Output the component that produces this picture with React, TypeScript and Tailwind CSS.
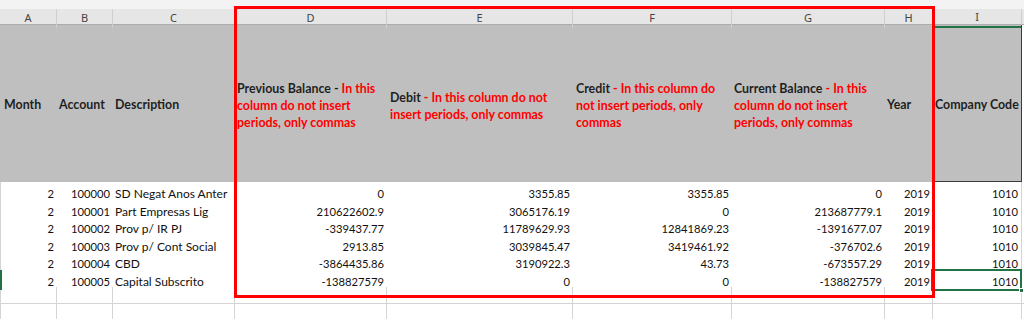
const cols = "grid grid-cols-[57px_56px_122px_152px_186px_159px_153px_48px_89px_1fr]";

const letters = ["A", "B", "C", "D", "E", "F", "G", "H", "I"];

const rows = [
  ["2", "100000", "SD Negat Anos Anter", "0", "3355.85", "3355.85", "0", "2019", "1010"],
  ["2", "100001", "Part Empresas Lig", "210622602.9", "3065176.19", "0", "213687779.1", "2019", "1010"],
  ["2", "100002", "Prov p/ IR PJ", "-339437.77", "11789629.93", "12841869.23", "-1391677.07", "2019", "1010"],
  ["2", "100003", "Prov p/ Cont Social", "2913.85", "3039845.47", "3419461.92", "-376702.6", "2019", "1010"],
  ["2", "100004", "CBD", "-3864435.86", "3190922.3", "43.73", "-673557.29", "2019", "1010"],
  ["2", "100005", "Capital Subscrito", "-138827579", "0", "0", "-138827579", "2019", "1010"],
];

function Note({ title, lines, first }: { title: string; lines: string[]; first: string }) {
  return (
    <div className="leading-[17px]">
      <div className="whitespace-nowrap">
        <span className="text-[#1f1f1f]">{title}</span>
        <span className="text-[#ff0000]">{first}</span>
      </div>
      {lines.map((l) => (
        <div key={l} className="whitespace-nowrap text-[#ff0000]">
          {l}
        </div>
      ))}
    </div>
  );
}

export default function App() {
  return (
    <div
      className="relative w-[1024px] h-[319px] overflow-hidden bg-white"
      style={{ fontFamily: "Lato, 'Noto Sans', sans-serif" }}
    >
      {/* strip above column letters */}
      <div className="h-[9px] bg-[#f3f3f3]" />

      {/* column letters */}
      <div className={`${cols} h-[16px] bg-[#e6e6e6] border-b border-[#acacac]`}>
        {letters.map((l, i) => (
          <div
            key={l}
            className={`flex items-center justify-center border-r border-[#cfcfcf] text-[11px] text-[#444] ${
              i === 8 ? "border-b-2 border-b-[#217346] text-[#1e5e3a]" : ""
            }`}
            style={{ fontFamily: "'Noto Sans', sans-serif" }}
          >
            {l}
          </div>
        ))}
        <div />
      </div>

      {/* header row */}
      <div className={`${cols} h-[157px] bg-[#bfbfbf] text-[12.4px] font-bold text-[#1f1f1f]`}>
        <div className="flex items-center pt-[4px] pl-[4px]">Month</div>
        <div className="flex items-center pt-[4px] pl-[2px]">Account</div>
        <div className="flex items-center pt-[4px] pl-[2px]">Description</div>
        <div className="flex items-center pt-[4px] pl-[2px]">
          <Note
            title="Previous Balance -  "
            first="In this"
            lines={["column do not insert", "periods, only commas"]}
          />
        </div>
        <div className="flex items-center pt-[4px] pl-[3px]">
          <Note
            title="Debit"
            first=" - In this column do not"
            lines={["insert periods, only commas"]}
          />
        </div>
        <div className="flex items-center pt-[4px] pl-[3px]">
          <Note
            title="Credit"
            first=" - In this column do"
            lines={["not insert periods, only", "commas"]}
          />
        </div>
        <div className="flex items-center pt-[4px] pl-[2px]">
          <Note
            title="Current Balance"
            first=" - In this"
            lines={["column do not insert", "periods, only commas"]}
          />
        </div>
        <div className="flex items-center pt-[4px] pl-[2px]">Year</div>
        <div className="flex items-center pt-[4px] pl-[1px] border-l border-r border-b border-[#3c3c3c] whitespace-nowrap">
          Company Code
        </div>
        <div className="bg-white" />
      </div>

      {/* data rows */}
      {rows.map((r, ri) => (
        <div key={r[1]} className={`${cols} h-[17.5px] text-[#111] leading-[17px]`}>
          {r.map((v, ci) => (
            <div
              key={ci}
              className={`relative flex items-center pt-[3px] whitespace-nowrap ${
                ci === 2
                  ? "justify-start pl-[2px] text-[12px]"
                  : "justify-end pr-[3px] text-[11.2px]"
              } ${ci === 0 ? "border-l border-[#d4d4d4]" : ""} ${
                ci === 8 ? "border-r border-[#d4d4d4]" : ""
              }`}
            >
              {ci === 0 && ri === 5 && (
                <span className="absolute -left-[1px] top-0 bottom-0 w-[2px] bg-[#217346]" />
              )}
              {v}
              {ci === 8 && ri === 5 && (
                <>
                  <span className="absolute -left-[2px] -top-[1px] -right-[1px] -bottom-[1px] border-2 border-[#217346]" />
                  <span className="absolute -right-[3px] -bottom-[3px] w-[5px] h-[5px] bg-[#217346] border border-white" />
                </>
              )}
            </div>
          ))}
          <div />
        </div>
      ))}

      {/* empty rows */}
      {[0, 1].map((k) => (
        <div key={k} className={`${cols} h-[17px] border-b border-[#d4d4d4]`}>
          {letters.map((l) => (
            <div key={l} className="border-r border-[#d4d4d4] first:border-l" />
          ))}
          <div />
        </div>
      ))}

      {/* red annotation box */}
      <div className="absolute left-[234px] top-[6px] w-[701px] h-[292px] border-[3px] border-[#ff0000] pointer-events-none" />
    </div>
  );
}
